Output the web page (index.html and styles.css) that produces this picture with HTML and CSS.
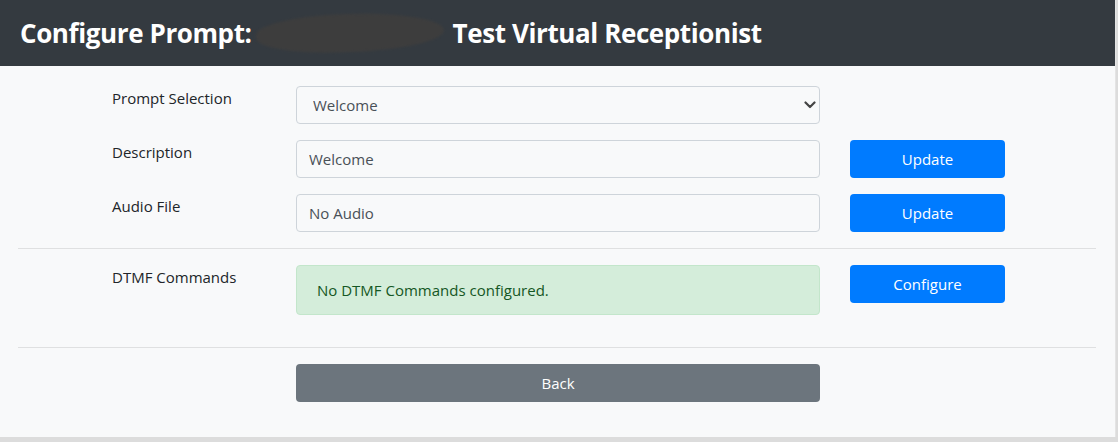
FILE: index.html
```html
<!DOCTYPE html>
<html lang="en">
<head>
<meta charset="utf-8">
<title>Configure Prompt</title>
<link rel="stylesheet" href="styles.css">
</head>
<body>
<div class="page">
  <header class="topbar">
    <h1 class="title">Configure Prompt:<span class="redact"></span>Test Virtual Receptionist</h1>
  </header>
  <main class="content">
    <div class="row">
      <label class="lbl" for="sel">Prompt Selection</label>
      <div class="select-wrap">
        <select id="sel" class="field select"><option>Welcome</option></select>
        <svg class="chev" width="12" height="8" viewBox="0 0 12 8"><path d="M1.5 1.5 L6 6 L10.5 1.5" fill="none" stroke="#444" stroke-width="2.2" stroke-linecap="round" stroke-linejoin="round"/></svg>
      </div>
    </div>
    <div class="row">
      <label class="lbl" for="desc">Description</label>
      <input id="desc" class="field" type="text" value="Welcome">
      <button class="btn btn-primary">Update</button>
    </div>
    <div class="row">
      <label class="lbl" for="aud">Audio File</label>
      <input id="aud" class="field" type="text" value="No Audio">
      <button class="btn btn-primary">Update</button>
    </div>
    <hr class="sep">
    <div class="row row-dtmf">
      <span class="lbl">DTMF Commands</span>
      <div class="alert">No DTMF Commands configured.</div>
      <button class="btn btn-primary">Configure</button>
    </div>
    <hr class="sep">
    <div class="row">
      <span class="lbl"></span>
      <button class="btn btn-secondary">Back</button>
    </div>
  </main>
</div>
</body>
</html>
```
FILE: styles.css
```css
* { box-sizing: border-box; }
html, body { margin: 0; padding: 0; }
body {
  background: #dcdcdc;
  font-family: "Open Sans", "Noto Sans", sans-serif;
  color: #212529;
  width: 1118px;
  height: 442px;
  overflow: hidden;
}
.page {
  width: 1116px;
  height: 437px;
  background: #f8f9fa;
  border-right: 1px solid #e4e4e4;
}
.topbar {
  background: #343a40;
  height: 66px;
  display: flex;
  align-items: center;
  padding-left: 20px;
}
.title {
  margin: 0;
  color: #fff;
  font-size: 26px;
  font-weight: 700;
  letter-spacing: -0.4px;
  display: flex;
  align-items: center;
  white-space: pre;
}
.redact {
  display: inline-block;
  width: 188px;
  height: 38px;
  margin: 0 9px 0 4px;
  border-radius: 48% 52% 50% 46%;
  background: #3d3d3d;
  filter: blur(0.8px);
  transform: rotate(-2deg);
}
.content {
  padding: 20px 19px 0 18px;
}
.row {
  display: grid;
  grid-template-columns: 184px 524px 30px 155px;
  padding-left: 94px;
  margin-bottom: 16px;
  align-items: start;
}
.row .lbl { grid-column: 1; }
.lbl {
  font-size: 15px;
  line-height: 24px;
  color: #212529;
}
.row .field, .row .select-wrap, .row .alert, .row .btn-secondary { grid-column: 2; }
.row .btn-primary { grid-column: 4; }
.field {
  height: 38px;
  width: 100%;
  border: 1px solid #ced4da;
  border-radius: 4px;
  background: #f8f9fa;
  padding: 0 12px;
  font-family: inherit;
  font-size: 15px;
  color: #495057;
}
.select-wrap { position: relative; }
.select {
  appearance: none;
  -webkit-appearance: none;
  padding-left: 16px;
}
.chev {
  position: absolute;
  right: 4px;
  top: 15px;
  pointer-events: none;
}
.btn {
  height: 38px;
  border: none;
  border-radius: 4px;
  font-family: inherit;
  font-size: 15px;
  color: #fff;
}
.btn-primary { background: #007bff; }
.btn-secondary { background: #6c757d; width: 100%; }
.row .lbl:empty { visibility: hidden; }
.sep {
  margin: 0 0 16px 0;
  border: 0;
  border-top: 1px solid #dfe0e1;
}
.row-dtmf { margin-bottom: 32px; }
.alert {
  height: 50px;
  background: #d4edda;
  border: 1px solid #c3e6cb;
  border-radius: 4px;
  color: #155724;
  font-size: 15px;
  padding: 0 20px;
  display: flex;
  align-items: center;
}
```
